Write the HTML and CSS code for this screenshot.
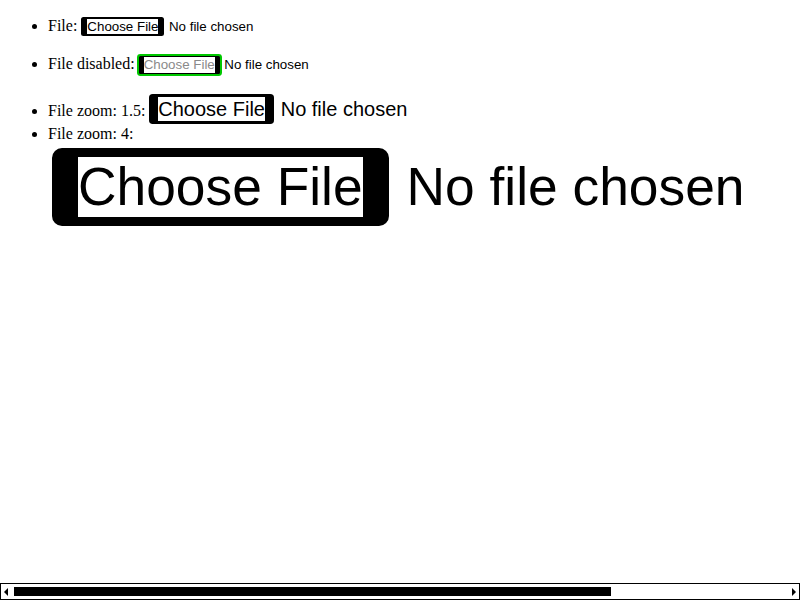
FILE: index.html
```html
<!DOCTYPE html>
<html lang="en">
<head>
<meta charset="utf-8">
<title>File inputs</title>
<link rel="stylesheet" href="styles.css">
</head>
<body>
<div class="page">
  <main class="content">
    <ul class="list">
      <li>File: <span class="file"><span class="fbtn">Choose File</span><span class="fname">No file chosen</span></span></li>
    </ul>
    <ul class="list">
      <li>File disabled: <span class="file"><span class="fbtn fbtn-disabled">Choose File</span><span class="fname">No file chosen</span></span></li>
    </ul>
    <ul class="list">
      <li>File zoom: 1.5: <span class="file file-z15"><span class="fbtn">Choose File</span><span class="fname">No file chosen</span></span></li>
      <li>File zoom: 4: <span class="file file-z4"><span class="fbtn">Choose File</span><span class="fname">No file chosen</span></span></li>
    </ul>
  </main>
  <div class="hscroll">
    <span class="arrow arrow-left"></span>
    <span class="track"><span class="thumb"></span></span>
    <span class="arrow arrow-right"></span>
  </div>
</div>
</body>
</html>
```

FILE: styles.css
```css
html, body {
  margin: 0;
  padding: 0;
  background: #fff;
  overflow: hidden;
}

.page {
  display: flex;
  flex-direction: column;
  height: 100vh;
  font-family: "Liberation Serif", "Times New Roman", serif;
  font-size: 16px;
  color: #000;
}

.content {
  flex: 1;
  padding: 16px 8px 0 8px;
}

.list {
  margin: 0;
  padding-left: 40px;
}

.list + .list {
  margin-top: 16px;
}

.list + .list + .list {
  margin-top: 15px;
}

.file {
  display: inline-block;
  margin: 1px 0;
  font-family: "Liberation Sans", Arial, sans-serif;
  font-size: 13.333px;
  white-space: nowrap;
}

.fbtn {
  display: inline-block;
  background: #fff;
  color: #000;
  border-style: solid;
  border-color: #000;
  border-width: 2.25px 6.5px;
  border-radius: 2.5px;
  line-height: 15px;
}

.fbtn-disabled {
  color: #8a8a8a;
  border-width: 1.5px 5px;
  margin: 2px 0;
  box-shadow: 0 0 0 2px #00c800;
  border-radius: 1.5px;
  line-height: 16px;
}

.fname {
  margin-left: 4.5px;
}

.file-z15 {
  zoom: 1.5;
}

.file-z15 .fbtn {
  line-height: 16px;
}

.file-z4 {
  zoom: 4;
  margin: 1.25px 0 1px 1px;
}

.hscroll {
  display: flex;
  align-items: center;
  height: 17px;
  box-sizing: border-box;
  border: 1px solid #000;
  padding: 0 3px;
  background: #fff;
}

.arrow {
  width: 0;
  height: 0;
  border-top: 4px solid transparent;
  border-bottom: 4px solid transparent;
}

.arrow-left {
  border-right: 4px solid #000;
}

.arrow-right {
  border-left: 4px solid #000;
}

.track {
  flex: 1;
  display: flex;
  align-items: center;
  margin: 0 6px;
}

.thumb {
  display: block;
  width: 597px;
  height: 9px;
  background: #000;
}
```
